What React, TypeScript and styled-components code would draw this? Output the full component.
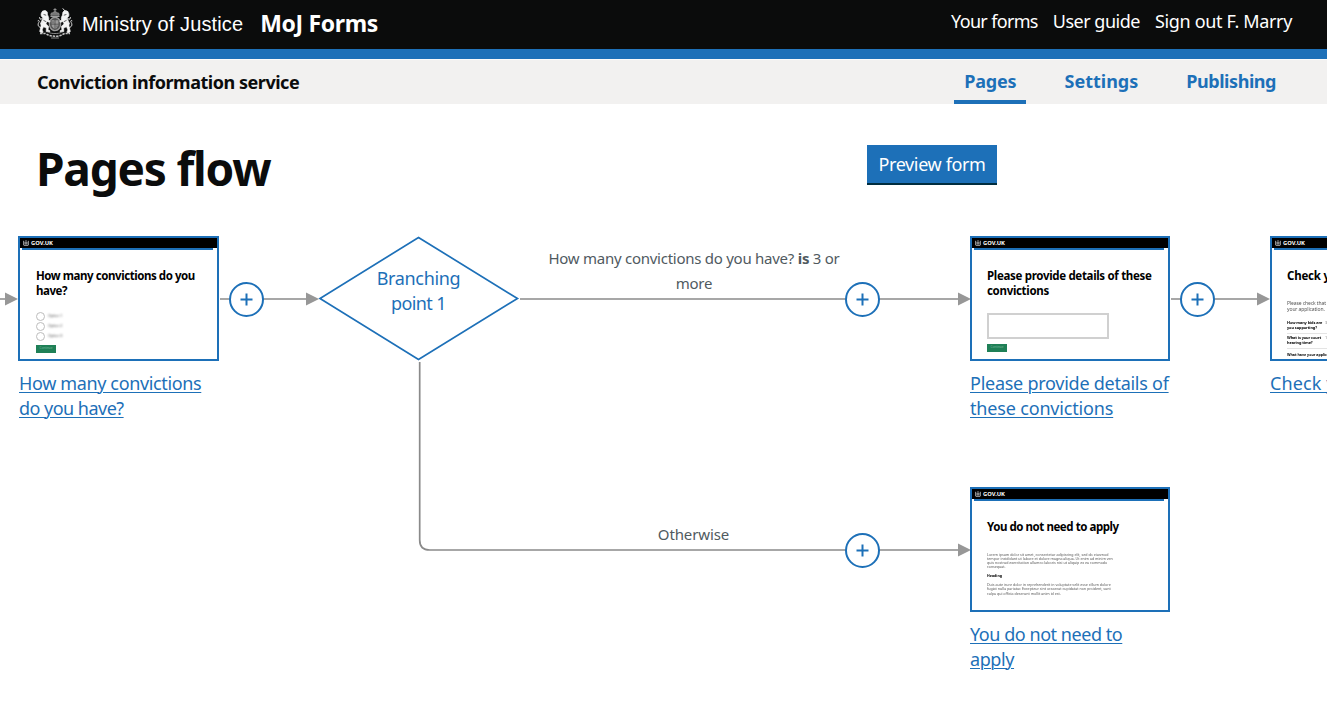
import React from "react";
import styled, { createGlobalStyle } from "styled-components";

const BLUE = "#1d70b8";
const INK = "#0b0c0c";
const GREY = "#8a8a8a";

const GlobalStyle = createGlobalStyle`
  *, *::before, *::after { box-sizing: border-box; }
  body {
    margin: 0;
    background: #fff;
    color: ${INK};
    font-family: "Noto Sans", "Open Sans", sans-serif;
    overflow: hidden;
  }
`;

const Page = styled.div`
  display: flex;
  flex-direction: column;
  width: 1327px;
  height: 715px;
  overflow: hidden;
`;

/* ---------- header ---------- */

const Header = styled.header`
  display: flex;
  justify-content: space-between;
  align-items: flex-start;
  height: 59px;
  flex: none;
  padding: 0 35px 0 37px;
  background: ${INK};
  border-bottom: 10px solid ${BLUE};
`;

const Brand = styled.div`
  display: flex;
  align-items: flex-start;
  color: #fff;
`;

const CrestSvg = styled.svg`
  width: 36px;
  height: 31px;
  margin-top: 8px;
`;

const Department = styled.span`
  margin-left: 9px;
  font: 20px/49px "Liberation Sans", Arial, sans-serif;
  letter-spacing: 0.12px;
`;

const Product = styled.span`
  margin-left: 17px;
  font-size: 23px;
  font-weight: 700;
  line-height: 46px;
  letter-spacing: -0.34px;
`;

const AccountNav = styled.nav`
  display: flex;
  gap: 15px;
`;

const AccountLink = styled.a<{ $tracking: number }>`
  color: #fff;
  font-size: 18px;
  line-height: 42px;
  letter-spacing: ${(p) => p.$tracking}px;
`;

/* ---------- service bar ---------- */

const ServiceBar = styled.div`
  display: flex;
  justify-content: space-between;
  height: 45px;
  flex: none;
  padding: 0 42px 0 37px;
  background: #f2f1f0;
  border-top: 1px solid #fafafa;
`;

const ServiceName = styled.span`
  font-size: 18px;
  font-weight: 700;
  line-height: 44px;
  letter-spacing: -0.47px;
`;

const Tabs = styled.nav`
  display: flex;
  gap: 29px;
`;

const Tab = styled.a<{ $active?: boolean; $tracking: number }>`
  padding: 0 9px 0 10px;
  color: ${BLUE};
  font-size: 18px;
  font-weight: 700;
  line-height: 43px;
  letter-spacing: ${(p) => p.$tracking}px;
  box-shadow: ${(p) => (p.$active ? `inset 0 -4px 0 ${BLUE}` : "none")};
`;

/* ---------- title ---------- */

const TitleRow = styled.div`
  display: flex;
  justify-content: space-between;
  align-items: flex-start;
  height: 96px;
  flex: none;
  padding: 41px 330px 0 36px;
`;

const Title = styled.h1`
  margin: 0;
  font-size: 46px;
  font-weight: 700;
  line-height: 47px;
  letter-spacing: -1.2px;
`;

const PreviewButton = styled.button`
  width: 130px;
  height: 40px;
  padding: 0 0 2px;
  border: 0;
  background: ${BLUE};
  box-shadow: inset 0 -2px 0 #002d3f;
  color: #fff;
  font: 18px/38px "Noto Sans", sans-serif;
  letter-spacing: -0.36px;
`;

/* ---------- flow canvas ---------- */

const Canvas = styled.main`
  position: relative;
  flex: 1;
  overflow: hidden;
`;

const Connectors = styled.svg`
  position: absolute;
  inset: 0;
  width: 1327px;
  height: 515px;
`;

const Node = styled.div<{ $x: number; $y: number; $w?: number }>`
  position: absolute;
  left: ${(p) => p.$x}px;
  top: ${(p) => p.$y}px;
  width: ${(p) => p.$w ?? 200}px;
`;

const Thumb = styled.div`
  display: flex;
  flex-direction: column;
  height: 125px;
  border: 2px solid ${BLUE};
  background: #fff;
  overflow: hidden;
`;

const ThumbHeader = styled.div`
  display: flex;
  align-items: center;
  gap: 2px;
  height: 10px;
  flex: none;
  padding-left: 3px;
  background: #000;
  color: #fff;
  font-size: 5.8px;
  font-weight: 700;
  line-height: 10px;
`;

const ThumbRule = styled.div`
  height: 2px;
  flex: none;
  margin: 0 4px 0 2px;
  background: ${BLUE};
`;

const ThumbBody = styled.div<{ $indent?: number }>`
  flex: 1;
  padding: 18px 0 0 ${(p) => p.$indent ?? 15}px;
`;

const ThumbTitle = styled.div<{ $tracking: number }>`
  font-size: 11.5px;
  font-weight: 700;
  line-height: 15px;
  letter-spacing: ${(p) => p.$tracking}px;
  white-space: nowrap;
  color: #000;
`;

const Radios = styled.div`
  display: flex;
  flex-direction: column;
  margin-top: 13px;
`;

const Radio = styled.div`
  display: flex;
  align-items: center;
  gap: 3px;
  height: 10px;
  color: #555;
  font-size: 3.8px;
  line-height: 10px;
  letter-spacing: -0.15px;

  &::before {
    content: "";
    width: 9px;
    height: 9px;
    border: 1.5px solid #bdbdbd;
    border-radius: 50%;
  }
  span { filter: blur(0.8px); }
`;

const Submit = styled.div<{ $gap: number }>`
  width: 20px;
  height: 8px;
  margin-top: ${(p) => p.$gap}px;
  background: #1f8057;
  color: #7dbb9f;
  font-size: 3px;
  line-height: 7.5px;
  text-align: center;
`;

const TextArea = styled.div`
  width: 122px;
  height: 26px;
  margin-top: 15px;
  border: 2px solid #d0d0d0;
`;

const Copy = styled.p<{ $gap: number; $bold?: boolean; $large?: boolean }>`
  margin: ${(p) => p.$gap}px 0 0;
  color: ${(p) => (p.$bold ? "#000" : "#555")};
  font-size: ${(p) => (p.$large ? 5 : 3.6)}px;
  font-weight: ${(p) => (p.$bold ? 700 : 400)};
  line-height: ${(p) => (p.$large ? 6 : 4.3)}px;
  letter-spacing: ${(p) => (p.$large ? -0.1 : 0)}px;
  white-space: nowrap;
  filter: blur(0.7px);
`;

const AnswerTable = styled.div`
  display: grid;
  grid-template-columns: 38px 1fr;
  margin-top: 7px;
`;

const Cell = styled.div<{ $bold?: boolean }>`
  height: 15px;
  padding-top: 1px;
  border-bottom: 1px solid #e4e4e4;
  color: ${(p) => (p.$bold ? "#000" : "#888")};
  font-size: 3.9px;
  font-weight: ${(p) => (p.$bold ? 700 : 400)};
  line-height: 5px;
  letter-spacing: -0.1px;
  white-space: nowrap;
  filter: blur(0.6px);
`;

const CardLink = styled.a<{ $inset?: number }>`
  display: block;
  margin: 10px 0 0 ${(p) => p.$inset ?? 0}px;
  color: ${BLUE};
  font-size: 18px;
  line-height: 25px;
  white-space: nowrap;
  text-decoration: underline;
  text-decoration-thickness: 1px;
  text-underline-offset: 2px;
`;

const Line = styled.span<{ $tracking: number }>`
  display: block;
  letter-spacing: ${(p) => p.$tracking}px;
`;

const BranchLabel = styled(Node)`
  color: ${BLUE};
  font-size: 18px;
  line-height: 25px;
  text-align: center;
`;

const Condition = styled(Node)<{ $tracking: number }>`
  color: #505a5f;
  font-size: 15px;
  line-height: 25px;
  text-align: center;
  letter-spacing: ${(p) => p.$tracking}px;
`;

const AddButton = styled.button<{ $x: number; $y: number }>`
  position: absolute;
  left: ${(p) => p.$x}px;
  top: ${(p) => p.$y}px;
  display: grid;
  place-items: center;
  width: 35px;
  height: 35px;
  padding: 0;
  border: 2px solid ${BLUE};
  border-radius: 50%;
  background: #fff;
`;

function Crest() {
  return (
    <CrestSvg viewBox="0 0 36 31" fill="none" stroke="#e8e8e8" strokeLinecap="round">
      {/* crown */}
      <path d="M14 7.6c-.8-2 .5-3.2 1.8-2.8.5-1.3 3.9-1.3 4.4 0 1.3-.4 2.6.8 1.8 2.8z" fill="#777" stroke="#999" strokeWidth=".7" />
      <path d="M18 .6v3M16.8 1.7h2.4M13.8 8.5h8.4" strokeWidth=".9" stroke="#aaa" />
      {/* garter and shield */}
      <ellipse cx="18" cy="16" rx="5.6" ry="6.6" fill="#555" stroke="#999" strokeWidth="1.3" strokeDasharray="1.6 .5" />
      <path d="M14.6 12.2h6.8v4.6c0 2-1.6 3.5-3.4 4.1-1.8-.6-3.4-2.1-3.4-4.1z" fill="#999" stroke="none" />
      <path d="M18 12.2v8.6M14.7 16.2h6.6M16 13.6v1.4M20 17.8v1.2" stroke="#444" strokeWidth=".7" />
      {/* lion */}
      <path d="M5.4 3.4c1.6-1.4 4-1 4.8.7.5 1.2-.1 2.1.6 3.3.8 1.6 1.3 3 .7 4.6l1.5 1-.6 1.3-2.5-.9-1 2.5 2.7 2.4-.6 3.4 2 1.2-.5 1.2-3.3-.5.2-3.5-2.9-1.4-1.4 3.2 1 2.3-1.8.8-1.6-1.5 1.4-5.7C3.1 15 5 12 6.3 10.3L4.400 8.200c-.6-1.600-.3-3.400 1-4.800z" fill="#f4f4f4" stroke="#f4f4f4" strokeWidth=".7" />
      <path d="M6.800 10.500L3.200 11.200 2.600 9.600M6 14L3.600 15.200M3.500 19.500C.2 18.600 1 15.500 1.900 14.300 2.800 12.800 1.600 12 1 12.600" strokeWidth="1" />
      {/* unicorn */}
      <path d="M30.600 3.400c-1.600-1.400-4-.8-4.700.9-.5 1.200.1 2-.6 3.200-.9 1.500-1.300 2.900-.7 4.500l-1.700 1 .6 1.300 2.500-.8 1.100 2.500-2.700 2.300.6 3.400-2 1.200.5 1.200 3.300-.5-.2-3.500 2.900-1.400 1.400 3.200-1 2.300 1.800.8 1.600-1.500-1.400-5.700c.9-2.800-.9-5.800-2.200-7.500l2-2.100c.5-1.700.1-3.400-1.100-4.800z" fill="#f4f4f4" stroke="#f4f4f4" strokeWidth=".7" />
      <path d="M28 3L26 .7M29.200 10.500l3.600.7.6-1.600M30 14l2.400 1.200M32.500 19.500c3.300-.9 2.500-4 1.600-5.200-.9-1.500.3-2.300.9-1.700" strokeWidth="1" />
      <path d="M7 6.600l1.800.5M6.800 12.500l2 1M29 6.600l-1.800.5M29.200 12.500l-2 1" stroke="#222" strokeWidth=".7" />
      {/* motto scroll */}
      <path d="M3 25.500c3 .5 4.500-.8 6.500.5 2.500 1.600 5.300 2.200 8.500 2.200s6-.6 8.500-2.200c2-1.300 3.500 0 6.500-.5" stroke="#c4c4c4" strokeWidth="1.500" strokeDasharray="2.400 .9" strokeLinecap="butt" />
      <path d="M12 24.500c1.600.8 3.400 1 6 1s4.400-.2 6-1M14.500 30h7" stroke="#888" strokeWidth="1" />
    </CrestSvg>
  );
}

function MiniCrest() {
  return (
    <svg width="6" height="6" viewBox="0 0 6 6" fill="none" stroke="#ddd" strokeWidth=".8">
      <path d="M.7 .8V5M5.300 .8V5M.7 5.300h4.600M3 .2v1" />
      <circle cx="3" cy="3" r="1.100" />
    </svg>
  );
}

function ThumbTop() {
  return (
    <>
      <ThumbHeader>
        <MiniCrest />
        GOV.UK
      </ThumbHeader>
      <ThumbRule />
    </>
  );
}

function Add({ x, y }: { x: number; y: number }) {
  return (
    <AddButton $x={x} $y={y} aria-label="Add page">
      <svg width="13" height="13" viewBox="0 0 13 13" stroke={BLUE} strokeWidth="2">
        <path d="M6.500 .5v12M.5 6.500h12" />
      </svg>
    </AddButton>
  );
}

const arrows: [number, number][] = [
  [18, 99],
  [319, 99],
  [971, 99],
  [1270, 99],
  [971, 350],
];

export default function App() {
  return (
    <Page>
      <GlobalStyle />
      <Header>
        <Brand>
          <Crest />
          <Department>Ministry of Justice</Department>
          <Product>MoJ Forms</Product>
        </Brand>
        <AccountNav>
          <AccountLink $tracking={-0.66}>Your forms</AccountLink>
          <AccountLink $tracking={-0.5}>User guide</AccountLink>
          <AccountLink $tracking={-0.34}>Sign out F. Marry</AccountLink>
        </AccountNav>
      </Header>

      <ServiceBar>
        <ServiceName>Conviction information service</ServiceName>
        <Tabs>
          <Tab $active $tracking={-0.15}>Pages</Tab>
          <Tab $tracking={0}>Settings</Tab>
          <Tab $tracking={-0.45}>Publishing</Tab>
        </Tabs>
      </ServiceBar>

      <TitleRow>
        <Title>Pages flow</Title>
        <PreviewButton>Preview form</PreviewButton>
      </TitleRow>

      <Canvas>
        <Connectors fill="none" stroke={GREY} strokeWidth="1.700">
          <path d="M0 99H6M220 99h12M260 99h47M520 99h328M878 99h82M1171 99h12M1212 99h47" />
          <path d="M419.700 162V340q0 10 10 10H848M878 350h82" />
          {arrows.map(([x, y]) => (
            <path key={`${x}-${y}`} d={`M${x} ${y}l-13-6.500v13z`} fill="#979797" stroke="none" />
          ))}
          <path d="M418.500 37.500L517.500 98.500L418.500 159.500L320 98.500Z" fill="#fff" stroke={BLUE} />
        </Connectors>

        <Node $x={18} $y={36} $w={201}>
          <Thumb>
            <ThumbTop />
            <ThumbBody $indent={16}>
              <ThumbTitle $tracking={-0.44}>How many convictions do you</ThumbTitle>
              <ThumbTitle $tracking={-0.44}>have?</ThumbTitle>
              <Radios>
                <Radio><span>Option 1</span></Radio>
                <Radio><span>Option 2</span></Radio>
                <Radio><span>Option 3</span></Radio>
              </Radios>
              <Submit $gap={4}>Continue</Submit>
            </ThumbBody>
          </Thumb>
          <CardLink $inset={1}>
            <Line $tracking={-0.36}>How many convictions</Line>
            <Line $tracking={-0.52}>do you have?</Line>
          </CardLink>
        </Node>

        <BranchLabel $x={318.5} $y={66}>
          <Line $tracking={-0.35}>Branching</Line>
          <Line $tracking={-0.6}>point 1</Line>
        </BranchLabel>

        <Condition $x={538} $y={45.5} $w={312} $tracking={-0.26}>
          How many convictions do you have? <b>is</b> 3 or more
        </Condition>

        <Condition $x={593.5} $y={321.5} $tracking={-0.1}>Otherwise</Condition>

        <Node $x={970} $y={36}>
          <Thumb>
            <ThumbTop />
            <ThumbBody>
              <ThumbTitle $tracking={-0.32}>Please provide details of these</ThumbTitle>
              <ThumbTitle $tracking={-0.32}>convictions</ThumbTitle>
              <TextArea />
              <Submit $gap={5}>Continue</Submit>
            </ThumbBody>
          </Thumb>
          <CardLink>
            <Line $tracking={-0.26}>Please provide details of</Line>
            <Line $tracking={-0.17}>these convictions</Line>
          </CardLink>
        </Node>

        <Node $x={1270} $y={36}>
          <Thumb>
            <ThumbTop />
            <ThumbBody>
              <ThumbTitle $tracking={-0.2}>Check your answers</ThumbTitle>
              <Copy $gap={17} $large>
                Please check that you are happy with
                <br />
                your application.
              </Copy>
              <AnswerTable>
                <Cell $bold>How many kids are<br />you supporting?</Cell>
                <Cell>3</Cell>
                <Cell $bold>What is your court<br />hearing time?</Cell>
                <Cell>10am</Cell>
              </AnswerTable>
              <Copy $gap={4} $bold>What have your application been</Copy>
            </ThumbBody>
          </Thumb>
          <CardLink>
            <Line $tracking={0.1}>Check your answers</Line>
          </CardLink>
        </Node>

        <Node $x={970} $y={287}>
          <Thumb>
            <ThumbTop />
            <ThumbBody>
              <ThumbTitle $tracking={-0.45}>You do not need to apply</ThumbTitle>
              <Copy $gap={18.5}>
                Lorem ipsum dolor sit amet, consectetur adipiscing elit, sed do eiusmod
                <br />
                tempor incididunt ut labore et dolore magna aliqua. Ut enim ad minim ven
                <br />
                quis nostrud exercitation ullamco laboris nisi ut aliquip ex ea commodo
                <br />
                consequat.
              </Copy>
              <Copy $gap={4.5} $bold>Heading</Copy>
              <Copy $gap={4.5}>
                Duis aute irure dolor in reprehenderit in voluptate velit esse cillum dolore
                <br />
                fugiat nulla pariatur. Excepteur sint occaecat cupidatat non proident, sunt
                <br />
                culpa qui officia deserunt mollit anim id est.
              </Copy>
            </ThumbBody>
          </Thumb>
          <CardLink>
            <Line $tracking={-0.45}>You do not need to</Line>
            <Line $tracking={-0.4}>apply</Line>
          </CardLink>
        </Node>

        <Add x={228.5} y={82} />
        <Add x={844.5} y={82} />
        <Add x={1180} y={82} />
        <Add x={844.5} y={333} />
      </Canvas>
    </Page>
  );
}
